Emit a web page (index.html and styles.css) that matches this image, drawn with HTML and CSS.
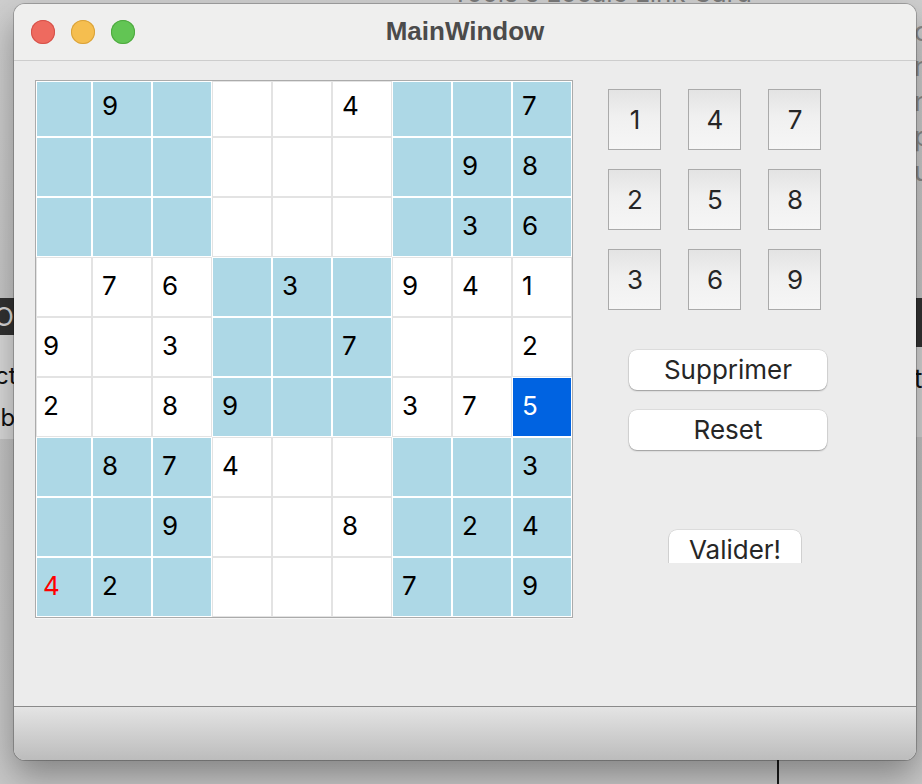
FILE: index.html
```html
<!DOCTYPE html>
<html lang="fr">
<head>
<meta charset="utf-8">
<title>MainWindow</title>
<link rel="stylesheet" href="styles.css">
</head>
<body>
<div class="desktop">
  <div class="bg-top-text">• Tools s Locale Link Card</div>
  <div class="bg-left-dark"><span>O</span></div>
  <div class="bg-left-light"><span class="l1">ecti</span><span class="l2">ab</span></div>
  <div class="bg-right-text"><span>c</span><span>n</span><span>n</span><span>p</span><span>u</span></div>
  <div class="bg-right-dark"></div>
  <div class="bg-right-light"><span>t</span></div>
  <div class="bg-cursor-line"></div>

  <div class="window">
    <div class="titlebar">
      <div class="lights">
        <span class="light red"></span>
        <span class="light yellow"></span>
        <span class="light green"></span>
      </div>
      <div class="title">MainWindow</div>
      <div></div>
    </div>

    <div class="content">
      <div class="board">
        <div class="cell b"></div><div class="cell b">9</div><div class="cell b"></div><div class="cell w"></div><div class="cell w"></div><div class="cell w">4</div><div class="cell b"></div><div class="cell b"></div><div class="cell b">7</div>
        <div class="cell b"></div><div class="cell b"></div><div class="cell b"></div><div class="cell w"></div><div class="cell w"></div><div class="cell w"></div><div class="cell b"></div><div class="cell b">9</div><div class="cell b">8</div>
        <div class="cell b"></div><div class="cell b"></div><div class="cell b"></div><div class="cell w"></div><div class="cell w"></div><div class="cell w"></div><div class="cell b"></div><div class="cell b">3</div><div class="cell b">6</div>
        <div class="cell w"></div><div class="cell w">7</div><div class="cell w">6</div><div class="cell b"></div><div class="cell b">3</div><div class="cell b"></div><div class="cell w">9</div><div class="cell w">4</div><div class="cell w">1</div>
        <div class="cell w">9</div><div class="cell w"></div><div class="cell w">3</div><div class="cell b"></div><div class="cell b"></div><div class="cell b">7</div><div class="cell w"></div><div class="cell w"></div><div class="cell w">2</div>
        <div class="cell w">2</div><div class="cell w"></div><div class="cell w">8</div><div class="cell b">9</div><div class="cell b"></div><div class="cell b"></div><div class="cell w">3</div><div class="cell w">7</div><div class="cell sel">5</div>
        <div class="cell b"></div><div class="cell b">8</div><div class="cell b">7</div><div class="cell w">4</div><div class="cell w"></div><div class="cell w"></div><div class="cell b"></div><div class="cell b"></div><div class="cell b">3</div>
        <div class="cell b"></div><div class="cell b"></div><div class="cell b">9</div><div class="cell w"></div><div class="cell w"></div><div class="cell w">8</div><div class="cell b"></div><div class="cell b">2</div><div class="cell b">4</div>
        <div class="cell b red">4</div><div class="cell b">2</div><div class="cell b"></div><div class="cell w"></div><div class="cell w"></div><div class="cell w"></div><div class="cell b">7</div><div class="cell b"></div><div class="cell b">9</div>
      </div>

      <div class="panel">
        <div class="keypad">
          <button class="key">1</button><button class="key">4</button><button class="key">7</button>
          <button class="key">2</button><button class="key">5</button><button class="key">8</button>
          <button class="key">3</button><button class="key">6</button><button class="key">9</button>
        </div>
        <button class="action">Supprimer</button>
        <button class="action reset">Reset</button>
        <div class="valider-clip"><button class="action valider">Valider!</button></div>
      </div>
    </div>

    <div class="statusbar"></div>
  </div>
</div>
</body>
</html>
```

FILE: styles.css
```css
* { box-sizing: border-box; }

html, body {
  margin: 0;
  padding: 0;
}

body {
  width: 922px;
  height: 784px;
  overflow: hidden;
  background: #c6c6c6;
  font-family: "Inter", "Liberation Sans", sans-serif;
}

.desktop {
  position: relative;
  width: 922px;
  height: 784px;
  background: linear-gradient(#cfcfcf, #c4c4c4 60%, #c8c8c8);
}

/* background apps peeking out behind the window */
.bg-top-text {
  position: absolute;
  left: 430px;
  top: -23px;
  font-size: 26px;
  color: #7a7a7a;
  white-space: nowrap;
}

.bg-left-dark {
  position: absolute;
  left: 0;
  top: 298px;
  width: 30px;
  height: 37px;
  background: #323232;
  overflow: hidden;
}
.bg-left-dark span {
  position: absolute;
  left: -6px;
  top: 3px;
  color: #d8d8d8;
  font-size: 26px;
}

.bg-left-light {
  position: absolute;
  left: 0;
  top: 335px;
  width: 30px;
  height: 104px;
  background: #dadada;
  overflow: hidden;
}
.bg-left-light span {
  position: absolute;
  font-size: 24px;
  color: #111;
  white-space: nowrap;
}
.bg-left-light .l1 { left: -19px; top: 26px; }
.bg-left-light .l2 { left: -13px; top: 68px; }

.bg-right-text {
  position: absolute;
  left: 914px;
  top: 14px;
  display: flex;
  flex-direction: column;
  font-size: 27px;
  line-height: 35px;
  color: #8a8a8a;
}

.bg-right-dark {
  position: absolute;
  left: 900px;
  top: 298px;
  width: 22px;
  height: 49px;
  background: #333;
}

.bg-right-light {
  position: absolute;
  left: 900px;
  top: 347px;
  width: 22px;
  height: 90px;
  background: #d6d6d6;
  font-size: 26px;
  color: #111;
}
.bg-right-light span {
  position: absolute;
  left: 14px;
  top: 16px;
}

.bg-cursor-line {
  position: absolute;
  left: 777px;
  top: 740px;
  width: 2px;
  height: 44px;
  background: #1a1a1a;
}

/* window */
.window {
  position: absolute;
  left: 14px;
  top: 4px;
  width: 902px;
  height: 756px;
  border-radius: 11px;
  overflow: hidden;
  background: #ececec;
  display: flex;
  flex-direction: column;
  box-shadow: 0 0 0 1px rgba(0, 0, 0, 0.22), 0 16px 34px rgba(0, 0, 0, 0.34);
}

.titlebar {
  height: 57px;
  flex: none;
  background: #efefee;
  border-bottom: 1px solid #cdcdcd;
  display: grid;
  grid-template-columns: 1fr auto 1fr;
  align-items: center;
}

.lights {
  display: flex;
  gap: 16px;
  padding-left: 17px;
}

.light {
  width: 24px;
  height: 24px;
  border-radius: 50%;
}
.light.red { background: #ee6a5f; box-shadow: inset 0 0 0 1px #d5524a; }
.light.yellow { background: #f5be4f; box-shadow: inset 0 0 0 1px #d9a23a; }
.light.green { background: #62c554; box-shadow: inset 0 0 0 1px #4ea93f; }

.title {
  font-family: "Liberation Sans", "Inter", sans-serif;
  font-weight: 700;
  font-size: 26px;
  color: #4b4b4b;
  padding-bottom: 1px;
}

.content {
  flex: 1;
  display: flex;
  align-items: flex-start;
  padding: 19px 0 0 21px;
}

/* sudoku board */
.board {
  display: grid;
  grid-template-columns: 54px repeat(8, 58px);
  grid-template-rows: 54px repeat(8, 58px);
  gap: 2px;
  padding: 1px;
  background: #fff;
  border: 1px solid #ababab;
  box-shadow: 0 1px 0 #f6f6f6;
}

.cell {
  display: flex;
  align-items: center;
  padding-left: 9px;
  padding-bottom: 4px;
  font-size: 26px;
  color: #000;
}
.cell:nth-child(9n + 1) { padding-left: 6px; }
.cell:nth-child(-n + 9) { padding-bottom: 7px; }

.cell.b { background: #add8e6; }
.cell.w { background: #fff; outline: 1px solid #e3e3e3; }
.cell.sel { background: #0063e1; color: #fff; }
.cell.red { color: #ff0000; }

/* right panel */
.panel {
  margin-left: 35px;
  margin-top: 9px;
  display: flex;
  flex-direction: column;
  align-items: flex-start;
}

.keypad {
  display: grid;
  grid-template-columns: repeat(3, 53px);
  grid-auto-rows: 61px;
  column-gap: 27px;
  row-gap: 19px;
}

.key {
  margin: 0;
  padding: 0 0 0 1px;
  border: 1px solid #aaaaaa;
  background: linear-gradient(#e3e3e3, #f0f0f0 45%, #f6f6f6);
  font-family: "Inter", "Liberation Sans", sans-serif;
  font-size: 26px;
  color: #262626;
}

.action {
  margin: 40px 0 0 21px;
  width: 198px;
  height: 40px;
  padding: 0 0 1px;
  border: none;
  border-radius: 8px;
  background: #fff;
  font-family: "Inter", "Liberation Sans", sans-serif;
  font-size: 26px;
  color: #262626;
  box-shadow: 0 1px 1.5px rgba(0, 0, 0, 0.3), 0 0 0 0.5px rgba(0, 0, 0, 0.12);
}

.action.reset { margin-top: 20px; }

.valider-clip {
  margin: 79px 0 0 60px;
  height: 34px;
  padding: 1px 1px 0;
  overflow: hidden;
}

.action.valider {
  margin: 0;
  width: 132px;
}

.statusbar {
  flex: none;
  height: 54px;
  border-top: 1px solid #8a8a8a;
  background: linear-gradient(#e4e4e4, #d2d2d2 45%, #bcbcbc);
}
```
